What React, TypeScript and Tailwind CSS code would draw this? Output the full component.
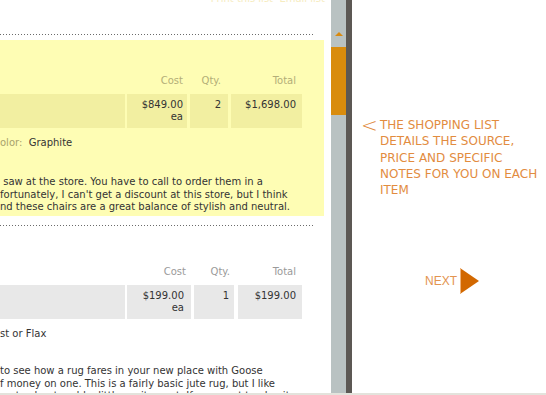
import React from 'react';

const body = "font-['DejaVu_Sans',Verdana,sans-serif]";

function Dots() {
  return (
    <div className="h-px w-[314px] bg-[repeating-linear-gradient(90deg,#6b6b6b_0_1px,transparent_1px_3px)]" />
  );
}

interface Col {
  w: string;
  head: string;
  headPad: string;
  val: React.ReactNode;
  valPad: string;
}

function PriceTable({ cols, cell, head }: { cols: Col[]; cell: string; head: string }) {
  return (
    <div>
      <div className={`flex text-[10px] leading-[13px] ${head}`}>
        {cols.map((c, i) => (
          <div key={i} className={`${c.w} text-right ${c.headPad}`}>
            {c.head}
          </div>
        ))}
      </div>
      <div className="flex mt-[7px] h-[34px] text-[10px] leading-[12px] text-[#333]">
        {cols.map((c, i) => (
          <div key={i} className={`${c.w} ${cell} text-right pt-[5px] ${c.valPad}`}>
            {c.val}
          </div>
        ))}
      </div>
    </div>
  );
}

export default function App() {
  const first: Col[] = [
    { w: 'w-[125px]', head: '', headPad: '', val: '', valPad: '' },
    {
      w: 'w-[60px] ml-[2px]',
      head: 'Cost',
      headPad: 'pr-[4px]',
      val: (
        <>
          $849.00
          <br />
          ea
        </>
      ),
      valPad: 'pr-[4px]',
    },
    { w: 'w-[38px] ml-[3px]', head: 'Qty.', headPad: 'pr-[7px]', val: '2', valPad: 'pr-[7px]' },
    { w: 'w-[71px] ml-[3px]', head: 'Total', headPad: 'pr-[6px]', val: '$1,698.00', valPad: 'pr-[6px]' },
  ];
  const second: Col[] = [
    { w: 'w-[125px]', head: '', headPad: '', val: '', valPad: '' },
    {
      w: 'w-[64px] ml-[2px]',
      head: 'Cost',
      headPad: 'pr-[5px]',
      val: (
        <>
          $199.00
          <br />
          ea
        </>
      ),
      valPad: 'pr-[7px]',
    },
    { w: 'w-[40px] ml-[3px]', head: 'Qty.', headPad: 'pr-[4px]', val: '1', valPad: 'pr-[5px]' },
    { w: 'w-[64px] ml-[4px]', head: 'Total', headPad: 'pr-[6px]', val: '$199.00', valPad: 'pr-[6px]' },
  ];

  return (
    <div className={`w-[546px] h-[395px] bg-white flex flex-col overflow-hidden ${body}`}>
      <div className="flex h-[393px]">
        {/* scrolled list */}
        <div className="w-[331px] h-full overflow-hidden whitespace-nowrap">
          <div className="h-[8px] overflow-hidden flex justify-end pr-[6px]">
            <div className="-mt-[8px] text-[10px] leading-[13px] text-[#f6ecc0]">Print this list &nbsp;Email list</div>
          </div>
          <div className="pt-[26px]">
            <Dots />
          </div>
          <div className="mt-[5px] w-[324px] h-[176px] bg-[#fefdb4] pt-[34px]">
            <PriceTable cols={first} cell="bg-[#f2efa1]" head="text-[#b3ae78]" />
            <div className="mt-[8px] text-[10px] leading-[13px] text-[#333]">
              <span className="text-[#a8a26c]">olor:</span>&nbsp; Graphite
            </div>
            <div className="mt-[27px] text-[10px] leading-[12.5px] text-[#333]">
              <div>&nbsp;saw at the store. You have to call to order them in a</div>
              <div>fortunately, I can't get a discount at this store, but I think</div>
              <div>nd these chairs are a great balance of stylish and neutral.</div>
            </div>
          </div>
          <div className="mt-[9px]">
            <Dots />
          </div>
          <div className="pt-[39px]">
            <PriceTable cols={second} cell="bg-[#e8e8e8]" head="text-[#9a9a9a]" />
          </div>
          <div className="mt-[8px] text-[10px] leading-[13px] text-[#333]">st or Flax</div>
          <div className="mt-[25px] text-[10px] leading-[12.5px] text-[#333]">
            <div>to see how a rug fares in your new place with Goose</div>
            <div>f money on one. This is a fairly basic jute rug, but I like</div>
            <div>rust color, to add a little excitement. If you want to play it</div>
          </div>
        </div>

        {/* scrollbar */}
        <div className="w-[15px] h-full bg-[#b9c2c2] flex flex-col items-center">
          <div className="mt-[32px] w-0 h-0 border-x-[4px] border-x-transparent border-b-[4px] border-b-[#d98a10]" />
          <div className="mt-[11px] w-full h-[68px] bg-[#d98c0d]" />
        </div>
        <div className="w-[6px] h-full bg-[#5c5854]" />

        {/* guide panel */}
        <div className="flex-1 flex flex-col">
          <div className="mt-[117px] flex">
            <div className="ml-[9px] w-[19px] text-[20px] leading-[16px] font-light text-[#e0893c]">&lt;</div>
            <div className="text-[12px] leading-[16.3px] text-[#e28c3f]">
              THE SHOPPING LIST
              <br />
              DETAILS THE SOURCE,
              <br />
              PRICE AND SPECIFIC
              <br />
              NOTES FOR YOU ON EACH
              <br />
              ITEM
            </div>
          </div>
          <div className="mt-[70px] flex items-center pl-[73px]">
            <span className="font-['Liberation_Sans',Arial,sans-serif] text-[12px] text-[#e39450]">NEXT</span>
            <svg width="20" height="26" viewBox="0 0 20 26" className="ml-[3px]">
              <polygon points="0,0 19,13 0,26" fill="#d26800" />
              <line x1="0.5" y1="0" x2="0.5" y2="26" stroke="#eeb27a" strokeWidth="1" />
            </svg>
          </div>
        </div>
      </div>
      <div className="h-[2px] bg-[#e3e3dc]" />
    </div>
  );
}
